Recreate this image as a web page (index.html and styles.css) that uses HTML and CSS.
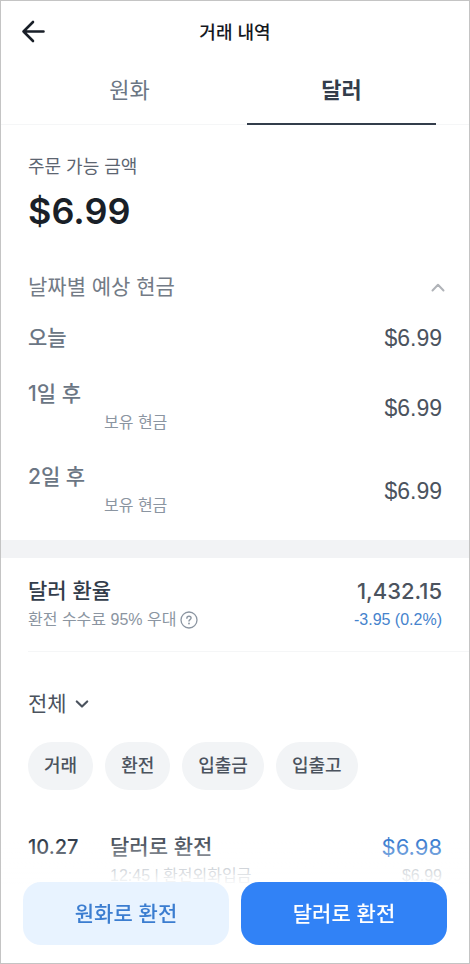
FILE: index.html
```html
<!DOCTYPE html>
<html lang="ko">
<head>
<meta charset="utf-8">
<meta name="viewport" content="width=device-width, initial-scale=1">
<title>거래 내역</title>
<link rel="stylesheet" href="styles.css">
</head>
<body>
<header class="topbar">
  <button class="back" type="button" aria-label="뒤로">
    <svg width="24" height="24" viewBox="0 0 24 24" fill="none" stroke="currentColor" stroke-width="2.6" stroke-linecap="round" stroke-linejoin="round"><path d="M22.500 12.500H2.500M12 3L2.500 12.500l9.500 9.500"/></svg>
  </button>
  <h1 class="title">거래 내역</h1>
</header>
<nav class="tabs">
  <a class="tab" href="#krw">원화</a>
  <a class="tab tab-active" href="#usd" aria-current="page">달러</a>
</nav>
<main>
  <section class="balance">
    <p class="balance-label">주문 가능 금액</p>
    <p class="balance-amount">$6.99</p>
    <button class="forecast-toggle" type="button" aria-expanded="true">
      <span>날짜별 예상 현금</span>
      <svg width="14" height="9" viewBox="0 0 14 9" fill="none" stroke="currentColor" stroke-width="2" stroke-linecap="round" stroke-linejoin="round"><path d="M1.500 7.500L7 1.800l5.500 5.700"/></svg>
    </button>
    <ul class="forecast">
      <li class="day">
        <span class="day-name">오늘</span>
        <span class="day-amount">$6.99</span>
      </li>
      <li class="day">
        <div>
          <span class="day-name">1일 후</span>
          <span class="day-note">보유 현금</span>
        </div>
        <span class="day-amount">$6.99</span>
      </li>
      <li class="day">
        <div>
          <span class="day-name">2일 후</span>
          <span class="day-note">보유 현금</span>
        </div>
        <span class="day-amount">$6.99</span>
      </li>
    </ul>
  </section>
  <section class="rate">
    <div>
      <h2 class="rate-title">달러 환율</h2>
      <p class="rate-note">환전 수수료 95% 우대
        <button class="help" type="button" aria-label="도움말">
          <svg width="18" height="18" viewBox="0 0 18 18" fill="none" stroke="currentColor" stroke-linecap="round" stroke-linejoin="round"><circle cx="9" cy="9" r="8" stroke-width="1.300"/><path d="M6.900 7.200c0-1.200.9-2 2.100-2s2.100.8 2.100 1.900c0 1.500-2.100 1.500-2.100 3" stroke-width="1.400"/><circle cx="9" cy="12.500" r=".9" fill="currentColor" stroke="none"/></svg>
        </button>
      </p>
    </div>
    <div class="rate-figures">
      <p class="rate-value">1,432.15</p>
      <p class="rate-change">-3.95 (0.2%)</p>
    </div>
  </section>
  <section class="history">
    <button class="filter" type="button">
      <span>전체</span>
      <svg width="14" height="10" viewBox="0 0 14 10" fill="none" stroke="currentColor" stroke-width="2.200" stroke-linecap="round" stroke-linejoin="round"><path d="M1.800 2.500L7 7.500l5.200-5"/></svg>
    </button>
    <div class="chips">
      <button class="chip" type="button">거래</button>
      <button class="chip" type="button">환전</button>
      <button class="chip" type="button">입출금</button>
      <button class="chip" type="button">입출고</button>
    </div>
    <article class="entry">
      <time class="entry-date">10.27</time>
      <div class="entry-body">
        <p class="entry-title">달러로 환전</p>
        <p class="entry-sub">12:45 | 환전외화입금</p>
      </div>
      <div class="entry-figures">
        <p class="entry-amount">$6.98</p>
        <p class="entry-sub">$6.99</p>
      </div>
    </article>
  </section>
</main>
<footer class="actions">
  <button class="action action-light" type="button">원화로 환전</button>
  <button class="action action-primary" type="button">달러로 환전</button>
</footer>
</body>
</html>
```
FILE: styles.css
```css
* {
  box-sizing: border-box;
  margin: 0;
  padding: 0;
}

body {
  min-height: 100vh;
  border: 1px solid #c4c4c4;
  background: #fff;
  color: #4b535e;
  font-family: "Liberation Sans", "Noto Sans CJK KR", sans-serif;
  font-size: 21px;
  line-height: 28px;
}

button {
  border: 0;
  background: none;
  color: inherit;
  font: inherit;
  cursor: pointer;
}

a {
  color: inherit;
  text-decoration: none;
}

ul {
  list-style: none;
}

svg {
  display: block;
}

.topbar {
  display: grid;
  grid-template-columns: 24px 1fr 24px;
  align-items: center;
  height: 60px;
  padding: 0 20px;
}

.back {
  color: #191f28;
}

.title {
  color: #14181e;
  font-family: "Noto Sans CJK KR", sans-serif;
  font-size: 18px;
  font-weight: 500;
  text-align: center;
}

.tabs {
  display: grid;
  grid-template-columns: 1fr 1fr;
  gap: 23px;
  padding: 0 33px 0 34px;
  border-bottom: 1px solid #f5f6f7;
}

.tab {
  margin-bottom: -1px;
  padding: 16px 0 18px;
  border-bottom: 2px solid transparent;
  color: #6b7684;
  font-size: 22px;
  text-align: center;
}

.tab-active {
  border-color: #333d4b;
  color: #333d4b;
  font-weight: 700;
}

.balance {
  padding: 30px 27px 22px;
  border-bottom: 18px solid #f2f3f5;
}

.balance-label {
  color: #5c6571;
  font-size: 18px;
  line-height: 24px;
}

.balance-amount {
  margin: 8px 0 38px;
  color: #191f28;
  font-family: Inter, sans-serif;
  font-size: 36px;
  font-weight: 600;
  line-height: 48px;
}

.forecast-toggle {
  display: flex;
  align-items: center;
  justify-content: space-between;
  width: 100%;
  color: #737b86;
}

.forecast-toggle svg {
  margin-right: -3px;
  color: #b0b3b8;
}

.forecast {
  display: grid;
  gap: 28px;
  margin-top: 23px;
}

.day {
  display: flex;
  align-items: center;
  justify-content: space-between;
}

.day-name {
  display: block;
  color: #6b7684;
  font-family: Inter, "Noto Sans CJK KR", sans-serif;
  font-weight: 500;
}

.day-note {
  display: block;
  margin: 3px 0 0 76px;
  color: #8b95a1;
  font-size: 16px;
  line-height: 24px;
}

.day-amount {
  font-size: 23px;
}

.rate {
  display: flex;
  justify-content: space-between;
  margin-left: 27px;
  padding: 19px 27px 19px 0;
  border-bottom: 1px solid #f5f6f7;
}

.rate-title {
  color: #333d4b;
  font-size: 21px;
  font-weight: 500;
}

.rate-note {
  display: flex;
  align-items: center;
  gap: 4px;
  margin-top: 3px;
  color: #8b95a1;
  font-size: 16px;
  line-height: 24px;
}

.rate-figures {
  text-align: right;
}

.rate-value {
  font-family: Inter, sans-serif;
  font-size: 22px;
  font-weight: 500;
}

.rate-change {
  margin-top: 3px;
  color: #4583cd;
  font-size: 16px;
  line-height: 24px;
}

.history {
  padding: 38px 27px 74px;
}

.filter {
  display: flex;
  align-items: center;
  gap: 8px;
}

.chips {
  display: flex;
  gap: 12px;
  margin-top: 24px;
}

.chip {
  padding: 10px 16px;
  border-radius: 24px;
  background: #f2f4f6;
  font-size: 18px;
  font-weight: 500;
}

.entry {
  display: flex;
  margin-top: 43px;
}

.entry-date {
  width: 82px;
  color: #333d4b;
  font-family: Inter, sans-serif;
  font-size: 20px;
  font-weight: 500;
}

.entry-body {
  flex: 1;
}

.entry-title {
  font-weight: 500;
}

.entry-sub {
  margin-top: 3px;
  color: #8b95a1;
  font-size: 16px;
  line-height: 24px;
}

.entry-figures {
  text-align: right;
}

.entry-amount {
  color: #3b7dd0;
  font-family: Inter, sans-serif;
  font-size: 22px;
}

.actions {
  position: fixed;
  right: 1px;
  bottom: 1px;
  left: 1px;
  display: grid;
  grid-template-columns: 1fr 1fr;
  gap: 12px;
  padding: 40px 22px 18px;
  background: linear-gradient(rgba(255, 255, 255, 0), #fff 44px);
  pointer-events: none;
}

.action {
  height: 63px;
  border-radius: 18px;
  font-weight: 500;
  pointer-events: auto;
}

.action-light {
  background: #e8f3ff;
  color: #3b7dd0;
}

.action-primary {
  background: #3182f6;
  color: #fff;
}
```
